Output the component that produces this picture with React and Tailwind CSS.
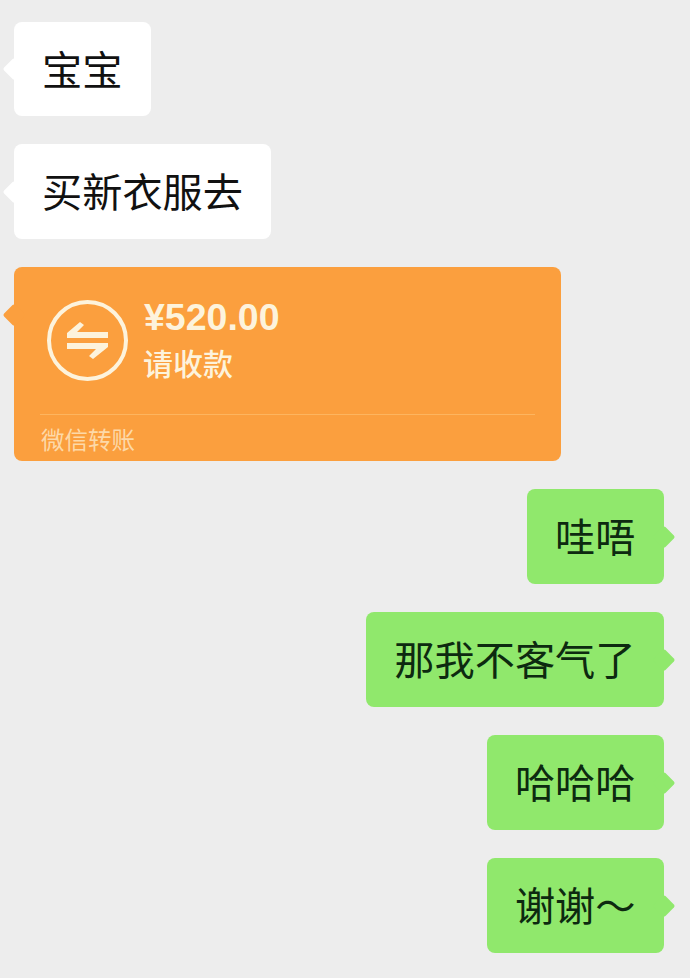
const cjk = "font-['Noto_Sans_CJK_SC',sans-serif]";

function Bubble({ text, side, short }) {
  const left = side === "left";
  return (
    <div className={`flex ${left ? "justify-start pl-[14px]" : "justify-end pr-[26px]"}`}>
      <div
        className={`relative ${short ? "h-[94px]" : "h-[95px]"} rounded-[8px] pl-[28px] pr-[28.5px] flex items-center text-[40.2px] leading-none whitespace-nowrap ${
          left ? "bg-white text-[#111111]" : "bg-[#90e86c] text-[#0d2a10]"
        }`}
      >
        <span
          className={`absolute top-1/2 -translate-y-1/2 w-[16px] h-[16px] rotate-45 rounded-[2px] ${
            left ? "-left-[8px] bg-white" : "-right-[8px] bg-[#90e86c]"
          }`}
        />
        <span className="relative -mt-[2px]">{text}</span>
      </div>
    </div>
  );
}

function TransferCard() {
  return (
    <div className="pl-[14px]">
      <div className="relative w-[547px] h-[194px] rounded-[8px] bg-[#fb9f3e] text-[#fdf3dc] flex flex-col">
        <span className="absolute -left-[8px] top-[40px] w-[16px] h-[16px] rotate-45 rounded-[2px] bg-[#fb9f3e]" />
        <div className="relative flex items-start pl-[33px] pt-[33px] gap-[16px] h-[147px] shrink-0">
          <svg width="81" height="81" viewBox="0 0 81 81" fill="none" stroke="#fdf3dc" className="shrink-0">
            <circle cx="40.5" cy="40.5" r="38.5" strokeWidth="4" />
            <path d="M20 38V33L33 22L37 25L30 32H61V38Z" fill="#fdf3dc" stroke="none" />
            <path d="M20 43H61V47L46 59L42 56L49 49H20Z" fill="#fdf3dc" stroke="none" />
          </svg>
          <div className="flex flex-col -mt-[2px]">
            <span className="text-[37.5px] leading-[38px] font-bold font-['Liberation_Sans',sans-serif]">¥520.00</span>
            <span className="mt-[7px] -ml-[1px] text-[30px] leading-[38px] font-medium">请收款</span>
          </div>
        </div>
        <div className="mx-[26px] h-px bg-[#fdb55f]" />
        <div className="pl-[27px] pt-[10px] text-[23.5px] leading-[28px] text-[#fdd9a8]">微信转账</div>
      </div>
    </div>
  );
}

export default function App() {
  return (
    <div className={`${cjk} w-[690px] h-[978px] bg-[#ededed] pt-[22px] flex flex-col gap-[28px] overflow-hidden`}>
      <Bubble side="left" text="宝宝" short />
      <Bubble side="left" text="买新衣服去" />
      <TransferCard />
      <Bubble side="right" text="哇唔" />
      <Bubble side="right" text="那我不客气了" />
      <Bubble side="right" text="哈哈哈" />
      <Bubble side="right" text="谢谢～" />
    </div>
  );
}
